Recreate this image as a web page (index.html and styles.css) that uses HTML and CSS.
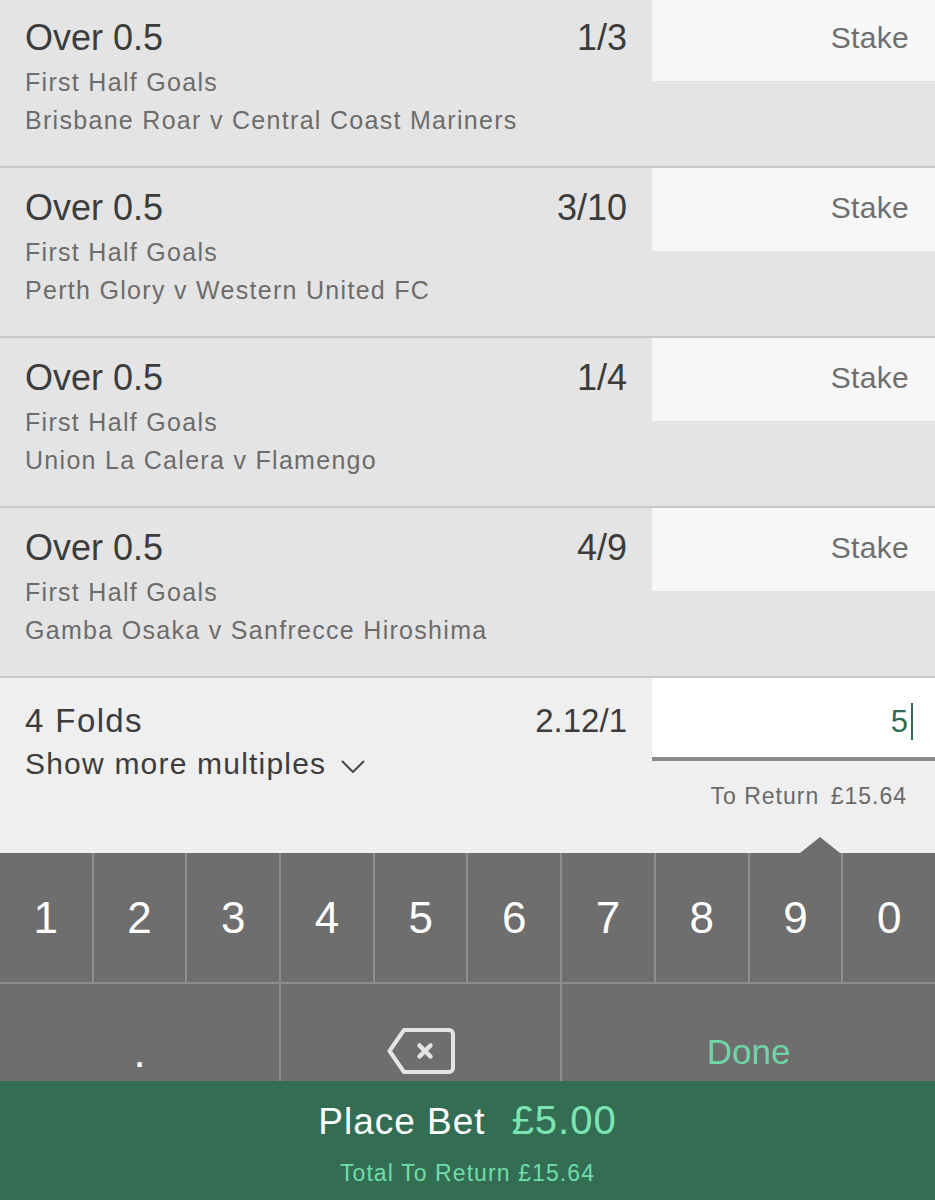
FILE: index.html
```html
<!DOCTYPE html>
<html lang="en">
<head>
  <meta charset="UTF-8" />
  <meta name="viewport" content="width=device-width, initial-scale=1.0" />
  <title>Bet Slip</title>
  <link rel="stylesheet" href="styles.css">
</head>
<body>
  <div class="slip">
    <div class="bet">
      <div class="bet-info">
        <div class="bet-head"><span>Over 0.5</span><span class="odds">1/3</span></div>
        <div class="market">First Half Goals</div>
        <div class="market">Brisbane Roar v Central Coast Mariners</div>
      </div>
      <div><div class="stake">Stake</div></div>
    </div>

    <div class="bet">
      <div class="bet-info">
        <div class="bet-head"><span>Over 0.5</span><span class="odds">3/10</span></div>
        <div class="market">First Half Goals</div>
        <div class="market">Perth Glory v Western United FC</div>
      </div>
      <div><div class="stake">Stake</div></div>
    </div>

    <div class="bet">
      <div class="bet-info">
        <div class="bet-head"><span>Over 0.5</span><span class="odds">1/4</span></div>
        <div class="market">First Half Goals</div>
        <div class="market">Union La Calera v Flamengo</div>
      </div>
      <div><div class="stake">Stake</div></div>
    </div>

    <div class="bet">
      <div class="bet-info">
        <div class="bet-head"><span>Over 0.5</span><span class="odds">4/9</span></div>
        <div class="market">First Half Goals</div>
        <div class="market">Gamba Osaka v Sanfrecce Hiroshima</div>
      </div>
      <div><div class="stake">Stake</div></div>
    </div>

    <div class="multi">
      <div class="multi-info">
        <div class="multi-head"><span class="folds">4 Folds</span><span class="odds">2.12/1</span></div>
        <div class="more">
          Show more multiples
          <svg class="chevron" width="24" height="14" viewBox="0 0 24 14">
            <polyline points="1.5,1.5 12,12 22.5,1.5" fill="none" stroke="#474747" stroke-width="2" stroke-linecap="round" stroke-linejoin="round" />
          </svg>
        </div>
      </div>
      <div>
        <div class="stake-input"><span class="value">5</span><span class="caret"></span></div>
        <div class="to-return">To Return <span class="amount">£15.64</span></div>
      </div>
      <div class="pointer"></div>
    </div>

    <div class="keypad">
      <div class="key">1</div>
      <div class="key">2</div>
      <div class="key">3</div>
      <div class="key">4</div>
      <div class="key">5</div>
      <div class="key">6</div>
      <div class="key">7</div>
      <div class="key">8</div>
      <div class="key">9</div>
      <div class="key">0</div>
      <div class="key wide dot">.</div>
      <div class="key wide back">
        <svg width="68" height="46" viewBox="0 0 68 46">
          <path d="M17 2 H62 a4 4 0 0 1 4 4 V40 a4 4 0 0 1 -4 4 H17 L2.5 23 Z" fill="none" stroke="#e4e4e4" stroke-width="4" stroke-linejoin="round" />
          <path d="M32.5 17.5 L43.5 28.5 M43.5 17.5 L32.5 28.5" stroke="#e4e4e4" stroke-width="4.5" stroke-linecap="round" />
        </svg>
      </div>
      <div class="key widest done">Done</div>
    </div>

    <div class="place">
      <div class="place-line"><span>Place Bet</span><span class="place-amount">£5.00</span></div>
      <div class="place-total">Total To Return £15.64</div>
    </div>
  </div>
</body>
</html>
```

FILE: styles.css
```css
body {
  font-family: 'Liberation Sans', Arial, sans-serif;
  margin: 0;
  background-color: #e4e4e4;
  overflow: hidden;
}

.slip {
  width: 935px;
  height: 1202px;
  margin-top: -2px;
}

.bet {
  display: grid;
  grid-template-columns: 1fr 283px;
  height: 168px;
  border-bottom: 2px solid #c9c9c9;
  background-color: #e4e4e4;
}

.bet-info {
  padding: 20px 25px 0 25px;
}

.bet-head {
  display: flex;
  justify-content: space-between;
  font-size: 36px;
  line-height: 40px;
  color: #3c3c3c;
}

.market {
  font-size: 25px;
  line-height: 38px;
  letter-spacing: 1.3px;
  color: #6c6c6c;
}

.bet-head + .market {
  margin-top: 5px;
}

.stake {
  height: 83px;
  background-color: #f7f7f7;
  text-align: right;
  padding-right: 26px;
  font-size: 30px;
  line-height: 79px;
  letter-spacing: 0.3px;
  color: #6f6f6f;
}

.multi {
  position: relative;
  display: grid;
  grid-template-columns: 1fr 283px;
  height: 175px;
  background-color: #efefef;
}

.multi-info {
  padding: 23px 25px 0 25px;
}

.multi-head {
  display: flex;
  justify-content: space-between;
  font-size: 33px;
  line-height: 40px;
  color: #3c3c3c;
}

.folds {
  letter-spacing: 1.4px;
}

.more {
  display: flex;
  align-items: center;
  gap: 15px;
  margin-top: 5px;
  font-size: 30px;
  line-height: 36px;
  letter-spacing: 1.2px;
  color: #3c3c3c;
}

.chevron {
  margin-top: 5px;
}

.stake-input {
  display: flex;
  justify-content: flex-end;
  align-items: flex-start;
  height: 54px;
  padding: 25px 22px 0 0;
  background-color: #fff;
  border-bottom: 4px solid #8a8a8a;
}

.value {
  font-size: 31px;
  line-height: 37px;
  color: #2f6b50;
}

.caret {
  width: 2px;
  height: 37px;
  margin-left: 3px;
  background-color: #2f6b50;
}

.to-return {
  margin-top: 20px;
  padding-right: 28px;
  text-align: right;
  font-size: 23px;
  line-height: 30px;
  letter-spacing: 1px;
  color: #696969;
}

.amount {
  margin-left: 4px;
}

.pointer {
  position: absolute;
  right: 95px;
  bottom: 0;
  width: 0;
  height: 0;
  border-left: 20px solid transparent;
  border-right: 20px solid transparent;
  border-bottom: 16px solid #6e6e6e;
}

.keypad {
  display: grid;
  grid-template-columns: repeat(10, 1fr);
  grid-template-rows: 129px 97px;
  gap: 2px;
  background-color: #8d8d8d;
}

.key {
  display: flex;
  justify-content: center;
  align-items: center;
  background-color: #6e6e6e;
  color: #fff;
  font-size: 44px;
}

.key.wide {
  grid-column: span 3;
  align-items: flex-start;
}

.key.widest {
  grid-column: span 4;
  align-items: flex-start;
}

.dot {
  padding-top: 46px;
  line-height: 44px;
}

.back {
  padding-top: 44px;
}

.done {
  padding-top: 48px;
  font-size: 35px;
  line-height: 40px;
  color: #70d4a7;
}

.place {
  height: 119px;
  background-color: #336e54;
  text-align: center;
}

.place-line {
  display: flex;
  justify-content: center;
  align-items: baseline;
  gap: 26px;
  padding-top: 17px;
  font-size: 37px;
  line-height: 44px;
  letter-spacing: 1px;
  color: #fff;
}

.place-amount {
  font-size: 40px;
  letter-spacing: 1px;
  color: #7de5b3;
}

.place-total {
  margin-top: 14px;
  font-size: 23px;
  line-height: 30px;
  letter-spacing: 1.1px;
  color: #6fdca9;
}
```
